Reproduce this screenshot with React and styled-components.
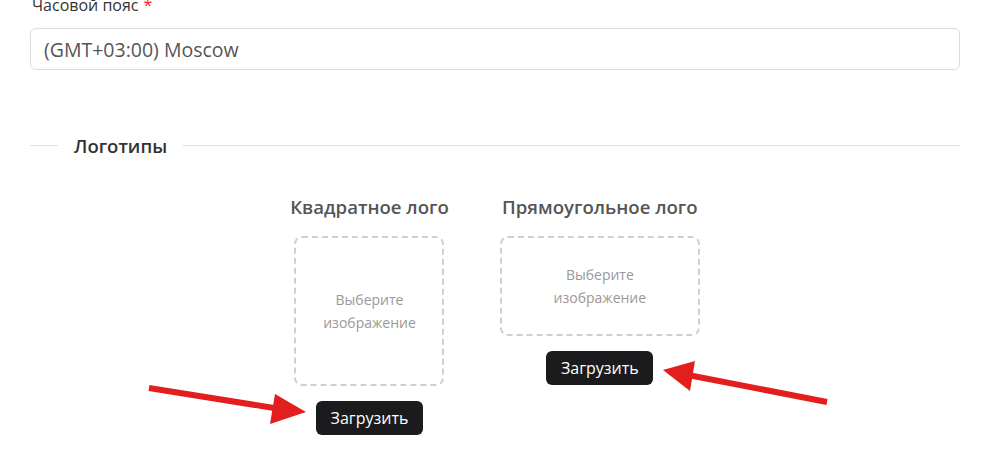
import styled, { createGlobalStyle } from "styled-components";

const GlobalStyle = createGlobalStyle`
  body {
    margin: 0;
    background: #fff;
    font-family: "Open Sans", "Noto Sans", sans-serif;
  }
`;

const Page = styled.div`
  position: relative;
  width: 982px;
  height: 452px;
  overflow: hidden;
  padding: 0 22px 0 30px;
  box-sizing: border-box;
`;

const Field = styled.div`
  display: flex;
  flex-direction: column;
  margin-top: -7px;
`;

const Label = styled.label`
  font-size: 16px;
  line-height: 24px;
  color: #333;
  padding-left: 2px;
  margin-bottom: 11px;
`;

const Required = styled.span`
  color: #f5222d;
  margin-left: 5px;
`;

const Input = styled.div`
  height: 42px;
  border: 1px solid #dcdcdc;
  border-radius: 6px;
  box-sizing: border-box;
  display: flex;
  align-items: center;
  padding: 0 13px;
  font-size: 19.5px;
  color: #555;
`;

const Divider = styled.div`
  display: flex;
  align-items: center;
  margin-top: 63px;
  gap: 16px;
  &::before {
    content: "";
    width: 28px;
    border-top: 1px solid #e0e0e0;
  }
  &::after {
    content: "";
    flex: 1;
    border-top: 1px solid #e0e0e0;
  }
`;

const DividerText = styled.span`
  font-size: 18.5px;
  font-weight: 600;
  color: #333;
`;

const Logos = styled.div`
  display: flex;
  justify-content: center;
  align-items: flex-start;
  gap: 51px;
  margin-top: 37px;
`;

const LogoColumn = styled.div`
  display: flex;
  flex-direction: column;
  align-items: center;
`;

const LogoTitle = styled.div`
  font-size: 18.6px;
  font-weight: 600;
  color: #555;
  line-height: 24px;
  margin-bottom: 17px;
`;

const DropBox = styled.div`
  width: ${(p) => p.$w}px;
  height: ${(p) => p.$h}px;
  box-sizing: border-box;
  border: 2px dashed #cfcfcf;
  border-radius: 8px;
  display: flex;
  align-items: center;
  justify-content: center;
  text-align: center;
  font-size: 14px;
  line-height: 23px;
  color: #999;
`;

const UploadButton = styled.button`
  margin-top: 15px;
  width: 107px;
  height: 34px;
  border: none;
  border-radius: 6px;
  background: #1b1b1d;
  color: #fff;
  font-family: "Open Sans", "Noto Sans", sans-serif;
  font-size: 16px;
  cursor: pointer;
`;

const Arrows = styled.svg`
  position: absolute;
  left: 0;
  top: 0;
  pointer-events: none;
`;

const logos = [
  { title: "Квадратное лого", w: 150, h: 150 },
  { title: "Прямоугольное лого", w: 200, h: 100 },
];

export default function App() {
  return (
    <>
      <GlobalStyle />
      <Page>
        <Field>
          <Label>
            Часовой пояс<Required>*</Required>
          </Label>
          <Input>(GMT+03:00) Moscow</Input>
        </Field>

        <Divider>
          <DividerText>Логотипы</DividerText>
        </Divider>

        <Logos>
          {logos.map((l) => (
            <LogoColumn key={l.title}>
              <LogoTitle>{l.title}</LogoTitle>
              <DropBox $w={l.w} $h={l.h}>
                Выберите
                <br />
                изображение
              </DropBox>
              <UploadButton>Загрузить</UploadButton>
            </LogoColumn>
          ))}
        </Logos>

        <Arrows width="982" height="452" viewBox="0 0 982 452">
          <g fill="#e21e1e" stroke="#e21e1e">
            <line x1="149" y1="388" x2="280" y2="409" strokeWidth="6" />
            <polygon points="306,412 275,394 270,424" stroke="none" />
            <line x1="827" y1="402" x2="688" y2="375" strokeWidth="6" />
            <polygon points="663,370 695,361 690,391" stroke="none" />
          </g>
        </Arrows>
      </Page>
    </>
  );
}
